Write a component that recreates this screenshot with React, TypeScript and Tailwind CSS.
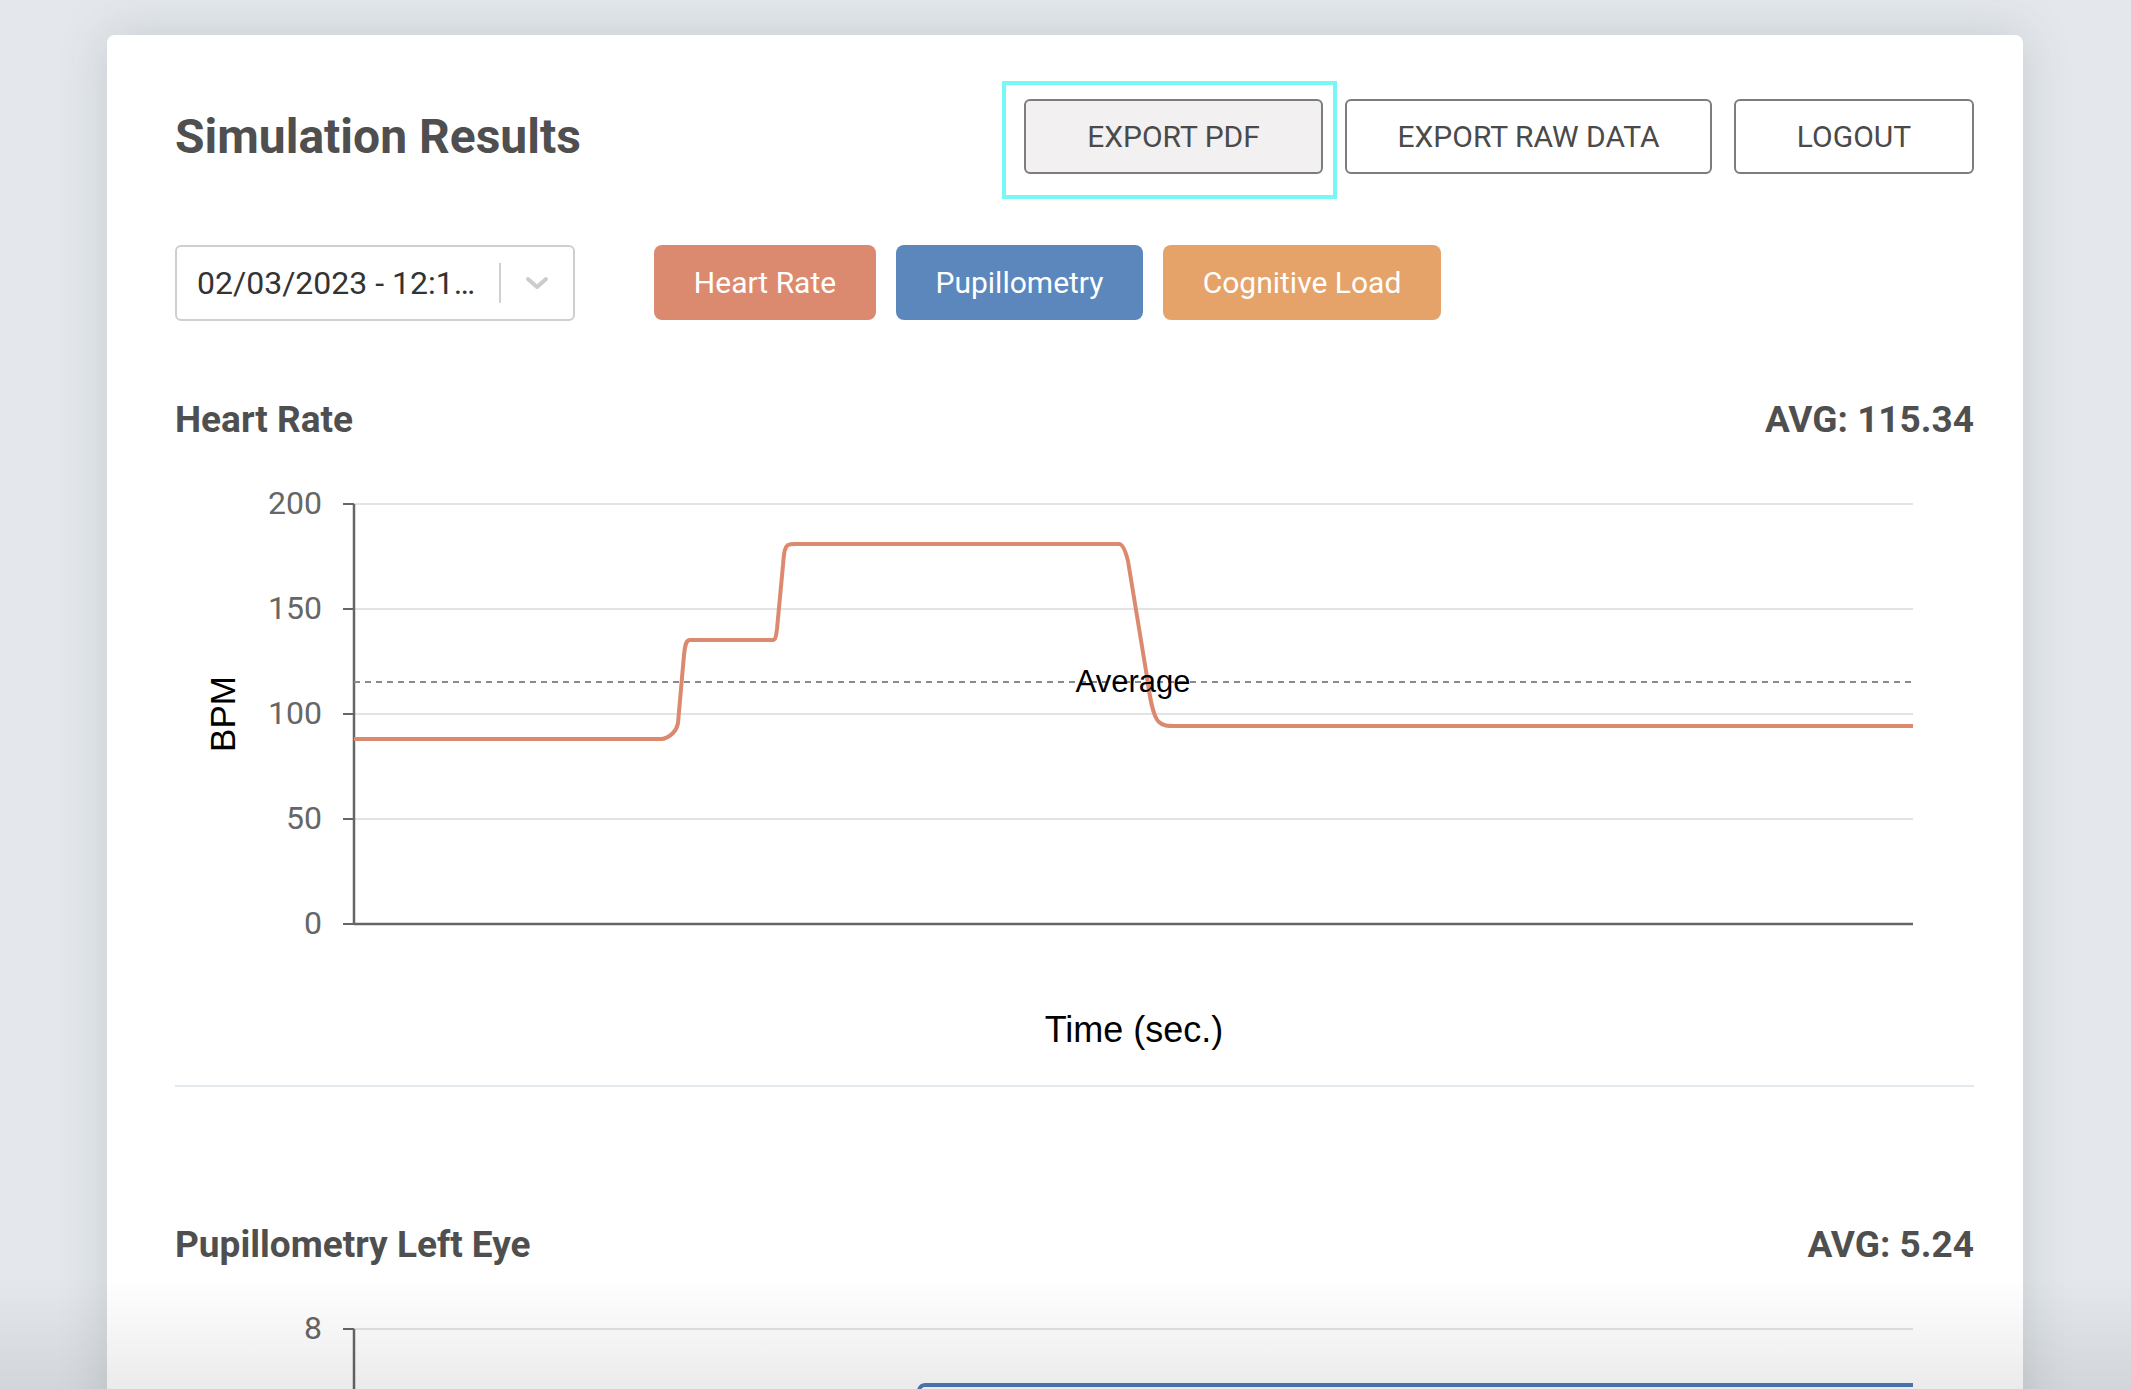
import React from "react";

const ROBOTO = "font-['Roboto',sans-serif]";
const ARIAL = "'Liberation Sans', Arial, sans-serif";

// plot geometry, in svg units (origin = content left / heading bottom)
const AXIS_X = 179;
const RIGHT_X = 1738;
const TOP_Y = 63;
const PER_TICK = 105;

const heartTicks = [200, 150, 100, 50, 0];

const heartPath = [
  "M179,298 L486,298",
  "C490,298 494,296 498,292",
  "C500,290 502,287 503,282",
  "L509,214",
  "C510,204 511,199 515,199",
  "L598,199",
  "C600,199 601,196 602,188",
  "L608,124",
  "C609,110 610,106 613,104",
  "C615,103 617,103 620,103",
  "L944,103",
  "C947,103 950,108 953,120",
  "L972,236",
  "C975,258 978,276 984,281",
  "C988,285 993,285 999,285",
  "L1738,285",
].join(" ");

function HeaderButton({
  label,
  width,
  active,
}: {
  label: string;
  width: string;
  active?: boolean;
}) {
  return (
    <button
      className={`${width} h-[75px] rounded-md border-2 border-[#7d7d7d] text-[30px] uppercase text-[#4a4a4a] ${
        active ? "bg-[#f2f0f1]" : "bg-white"
      }`}
    >
      {label}
    </button>
  );
}

function Pill({ label, width, color }: { label: string; width: string; color: string }) {
  return (
    <button className={`${width} ${color} h-[75px] rounded-lg text-[30px] text-white`}>
      {label}
    </button>
  );
}

function SectionHeading({ title, avg }: { title: string; avg: string }) {
  return (
    <div className="flex items-center justify-between text-[37px] font-bold leading-[42px] text-[#4f4f4f]">
      <span>{title}</span>
      <span>{avg}</span>
    </div>
  );
}

export default function App() {
  return (
    <div className={`relative h-screen overflow-hidden bg-[#e4e8ec] ${ROBOTO}`}>
      <div className="ml-[107px] mt-[35px] w-[1916px] rounded-lg bg-white pb-10 pl-[68px] pr-[49px] pt-16 shadow-[0_0_50px_rgba(60,70,80,0.18)]">
        {/* header */}
        <div className="flex items-center justify-between">
          <h1 className="text-[48px] font-bold leading-none text-[#4f4f4f]">Simulation Results</h1>
          <div className="flex items-center gap-[22px]">
            <div className="relative">
              <div className="pointer-events-none absolute -bottom-[25px] -left-[22px] -right-[14px] -top-[18px] border-[4px] border-[#78f7f7]" />
              <HeaderButton label="Export PDF" width="w-[299px]" active />
            </div>
            <HeaderButton label="Export Raw Data" width="w-[367px]" />
            <HeaderButton label="Logout" width="w-[240px]" />
          </div>
        </div>

        {/* controls */}
        <div className="mt-[71px] flex items-start">
          <div className="flex h-[76px] w-[400px] items-center rounded-md border-2 border-[#cfcfcf] pl-[20px]">
            <span className="w-[302px] whitespace-nowrap text-[32px] text-[#333333]">
              02/03/2023 - 12:1…
            </span>
            <span className="h-[40px] w-[2px] bg-[#d0d0d0]" />
            <span className="flex flex-1 justify-center">
              <svg width="24" height="16" viewBox="0 0 24 16">
                <path d="M3 4 L12 12 L21 4" fill="none" stroke="#cccccc" strokeWidth="4" strokeLinecap="round" strokeLinejoin="round" />
              </svg>
            </span>
          </div>
          <div className="ml-[79px] flex gap-[20px]">
            <Pill label="Heart Rate" width="w-[222px]" color="bg-[#dc8a6f]" />
            <Pill label="Pupillometry" width="w-[247px]" color="bg-[#5b87bc]" />
            <Pill label="Cognitive Load" width="w-[278px]" color="bg-[#e5a36a]" />
          </div>
        </div>

        {/* heart rate */}
        <div className="mt-[78px]">
          <SectionHeading title="Heart Rate" avg="AVG: 115.34" />
          <svg width="1799" height="620" viewBox="0 0 1799 620" className="block">
            {heartTicks.map((t, i) => {
              const y = TOP_Y + i * PER_TICK;
              return (
                <g key={t}>
                  <line x1={AXIS_X} x2={RIGHT_X} y1={y} y2={y} stroke={t === 0 ? "#666666" : "#e3e3e3"} strokeWidth={t === 0 ? 2.5 : 2} />
                  <line x1={168} x2={AXIS_X} y1={y} y2={y} stroke="#666666" strokeWidth="2" />
                  <text x={147} y={y + 2} textAnchor="end" dominantBaseline="middle" fontSize="32" fill="#666666" fontFamily="Roboto, sans-serif">
                    {t}
                  </text>
                </g>
              );
            })}
            <line x1={AXIS_X} x2={AXIS_X} y1={TOP_Y} y2={TOP_Y + 4 * PER_TICK} stroke="#666666" strokeWidth="2.5" />
            <line x1={AXIS_X} x2={RIGHT_X} y1={241} y2={241} stroke="#8a8a8a" strokeWidth="2" strokeDasharray="6 5" />
            <path d={heartPath} fill="none" stroke="#dc8a6f" strokeWidth="4" strokeLinejoin="round" />
            <text x={958} y={243} textAnchor="middle" dominantBaseline="middle" fontSize="31" fill="#000000" fontFamily={ARIAL}>
              Average
            </text>
            <text
              x={51}
              y={273}
              textAnchor="middle"
              dominantBaseline="middle"
              fontSize="35"
              fill="#000000"
              fontFamily={ARIAL}
              transform="rotate(-90 51 273)"
            >
              BPM
            </text>
            <text x={959} y={591} textAnchor="middle" dominantBaseline="middle" fontSize="36" fill="#000000" fontFamily={ARIAL}>
              Time (sec.)
            </text>
          </svg>
        </div>

        <div className="mt-[24px] h-[2px] bg-[#e4e9ed]" />

        {/* pupillometry */}
        <div className="mt-[137px]">
          <SectionHeading title="Pupillometry Left Eye" avg="AVG: 5.24" />
          <svg width="1799" height="260" viewBox="0 0 1799 260" className="block">
            <line x1={AXIS_X} x2={RIGHT_X} y1={TOP_Y} y2={TOP_Y} stroke="#e3e3e3" strokeWidth="2" />
            <line x1={168} x2={AXIS_X} y1={TOP_Y} y2={TOP_Y} stroke="#666666" strokeWidth="2" />
            <text x={147} y={TOP_Y + 2} textAnchor="end" dominantBaseline="middle" fontSize="32" fill="#666666" fontFamily="Roboto, sans-serif">
              8
            </text>
            <line x1={AXIS_X} x2={AXIS_X} y1={TOP_Y} y2={260} stroke="#666666" strokeWidth="2.5" />
            <path d="M740,160 L743,128 C744,121 746,119 750,119 L1738,119" fill="none" stroke="#4d7bb8" strokeWidth="4" strokeLinejoin="round" />
          </svg>
        </div>
      </div>

      {/* bottom fade */}
      <div className="pointer-events-none absolute inset-x-0 bottom-0 h-[110px] bg-gradient-to-b from-transparent to-black/[0.08]" />
    </div>
  );
}
